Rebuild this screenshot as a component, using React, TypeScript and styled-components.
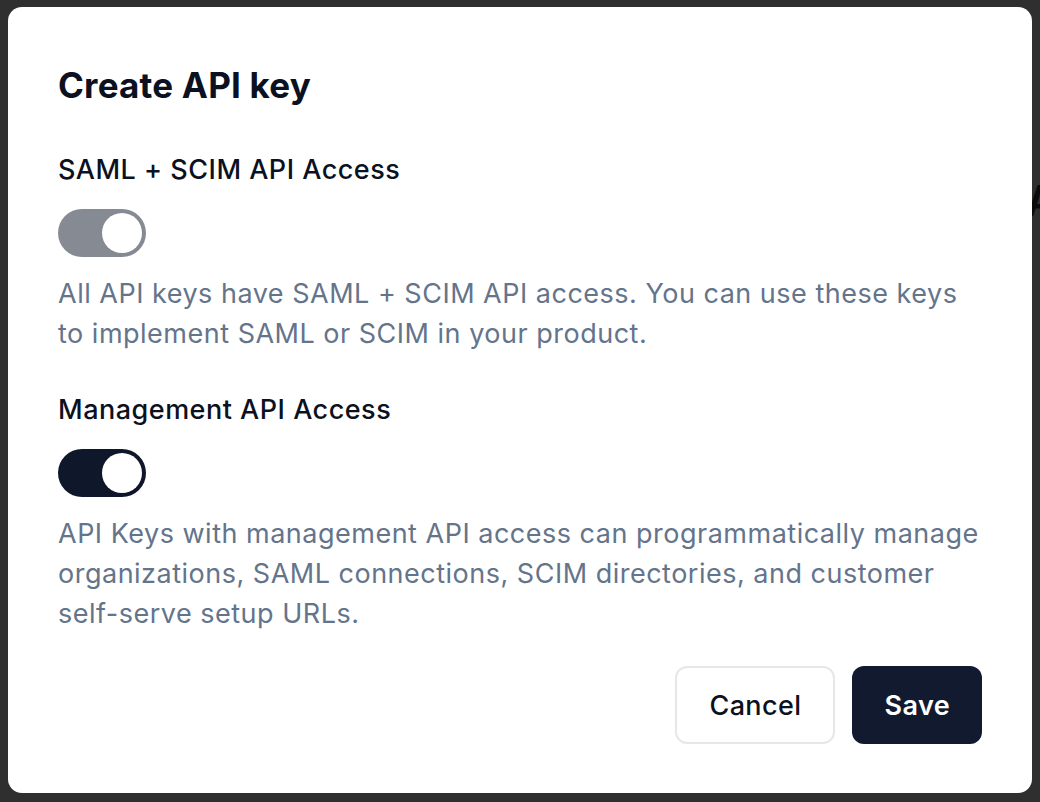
import React, { useState } from "react";
import styled, { createGlobalStyle } from "styled-components";

const GlobalStyle = createGlobalStyle`
  * { box-sizing: border-box; }
  html, body { margin: 0; padding: 0; }
  body {
    background: #2f2f2f;
    font-family: Inter, "Noto Sans", "Liberation Sans", sans-serif;
    -webkit-font-smoothing: antialiased;
  }
`;

const Backdrop = styled.div`
  position: relative;
  height: 802px;
  padding: 7px 8px 9px 8px;
  background: #2f2f2f;
  overflow: hidden;
`;

const PageGlyph = styled.span`
  position: absolute;
  left: 1026px;
  top: 180px;
  font-size: 42px;
  font-weight: 600;
  color: #0b0b0b;
  line-height: 1;
`;

const Modal = styled.div`
  position: relative;
  height: 786px;
  background: #ffffff;
  border-radius: 14px;
  padding: 58px 48px 49px 50px;
  display: flex;
  flex-direction: column;
`;

const Title = styled.h2`
  margin: 0 0 45px 0;
  font-size: 35px;
  line-height: 40px;
  font-weight: 700;
  color: #0b1120;
  letter-spacing: 0.2px;
`;

const Section = styled.div<{ $gapAfter: number }>`
  display: flex;
  flex-direction: column;
  align-items: flex-start;
  margin-bottom: ${(p) => p.$gapAfter}px;
`;

const Label = styled.div`
  font-size: 27px;
  line-height: 40px;
  font-weight: 500;
  color: #0b1120;
  letter-spacing: 0.5px;
  margin-bottom: 19px;
`;

const Track = styled.button<{ $on: boolean; $disabled?: boolean }>`
  position: relative;
  width: 88px;
  height: 48px;
  border-radius: 24px;
  border: none;
  padding: 4px;
  margin: 0 0 17px 0;
  background: ${(p) => (p.$on ? "#0f172a" : "#e2e8f0")};
  opacity: ${(p) => (p.$disabled ? 0.5 : 1)};
  display: flex;
  align-items: center;
  justify-content: ${(p) => (p.$on ? "flex-end" : "flex-start")};
  cursor: ${(p) => (p.$disabled ? "not-allowed" : "pointer")};
`;

const Knob = styled.span`
  width: 40px;
  height: 40px;
  border-radius: 50%;
  background: #ffffff;
  box-shadow: 0 1px 3px rgba(0, 0, 0, 0.12);
`;

const Description = styled.p`
  margin: 0;
  font-size: 27px;
  line-height: 40px;
  font-weight: 400;
  letter-spacing: 0.5px;
  color: #64748b;
`;

const Footer = styled.div`
  display: flex;
  justify-content: flex-end;
  gap: 17px;
  margin-top: auto;
  margin-right: 2px;
`;

const Button = styled.button<{ $primary?: boolean }>`
  height: 78px;
  padding: 0 32px;
  border-radius: 12px;
  font-family: inherit;
  font-size: 27px;
  letter-spacing: 0.4px;
  font-weight: ${(p) => (p.$primary ? 600 : 500)};
  background: ${(p) => (p.$primary ? "#111a2e" : "#ffffff")};
  color: ${(p) => (p.$primary ? "#ffffff" : "#0b1120")};
  border: ${(p) => (p.$primary ? "none" : "2px solid #e5e7eb")};
  cursor: pointer;
`;

function Switch({ on, disabled, onToggle }: { on: boolean; disabled?: boolean; onToggle?: () => void }) {
  return (
    <Track
      type="button"
      role="switch"
      aria-checked={on}
      $on={on}
      $disabled={disabled}
      onClick={() => !disabled && onToggle && onToggle()}
    >
      <Knob />
    </Track>
  );
}

export default function App() {
  const [mgmt, setMgmt] = useState(true);
  return (
    <>
      <GlobalStyle />
      <Backdrop>
        <PageGlyph>A</PageGlyph>
        <Modal role="dialog" aria-label="Create API key">
          <Title>Create API key</Title>
          <Section $gapAfter={36}>
            <Label>SAML + SCIM API Access</Label>
            <Switch on disabled />
            <Description>
              All API keys have SAML + SCIM API access. You can use these keys to implement SAML or SCIM in your
              product.
            </Description>
          </Section>
          <Section $gapAfter={32}>
            <Label>Management API Access</Label>
            <Switch on={mgmt} onToggle={() => setMgmt(!mgmt)} />
            <Description>
              API Keys with management API access can programmatically manage organizations, SAML connections, SCIM
              directories, and customer self-serve setup URLs.
            </Description>
          </Section>
          <Footer>
            <Button type="button">Cancel</Button>
            <Button type="button" $primary>
              Save
            </Button>
          </Footer>
        </Modal>
      </Backdrop>
    </>
  );
}
